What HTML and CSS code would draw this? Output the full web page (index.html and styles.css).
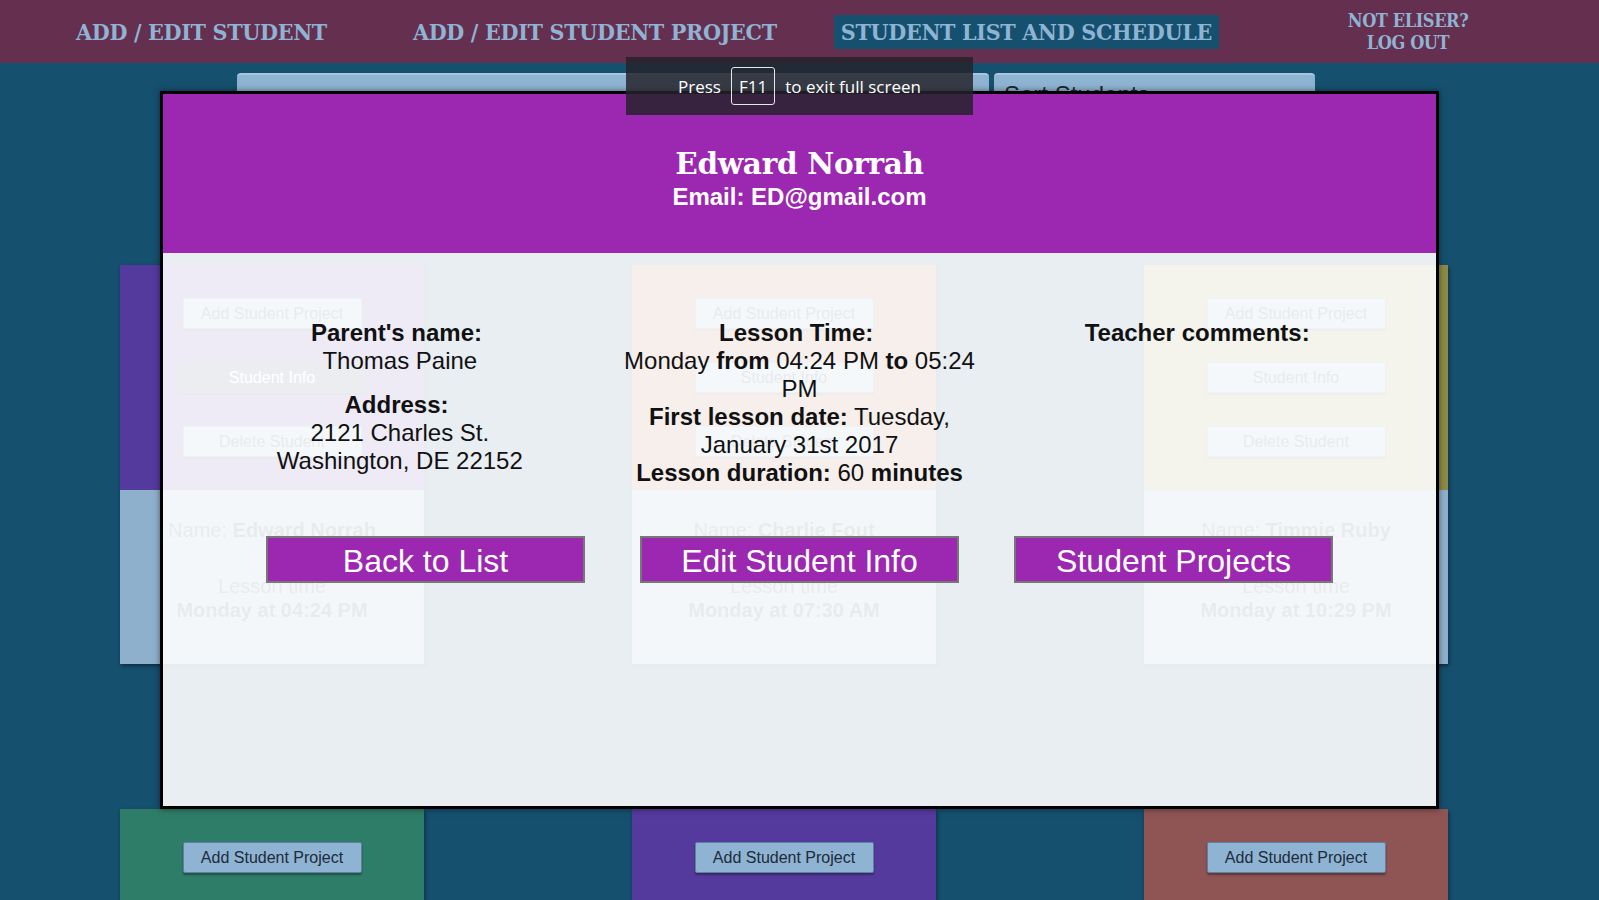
FILE: index.html
```html
<!DOCTYPE html>
<html lang="en">
<head>
<meta charset="utf-8">
<title>Student List and Schedule</title>
<link rel="stylesheet" href="styles.css">
</head>
<body>
<nav class="topnav">
  <a class="nav-link nav-student">ADD / EDIT STUDENT</a>
  <a class="nav-link nav-project">ADD / EDIT STUDENT PROJECT</a>
  <a class="nav-link nav-active">STUDENT LIST AND SCHEDULE</a>
  <div class="nav-user"><span>NOT ELISER?</span><span>LOG OUT</span></div>
</nav>

<main class="page">
  <div class="controls">
    <div class="search"></div>
    <div class="sort">Sort Students</div>
  </div>

  <div class="grid">
    <div class="card">
      <div class="card-top c-purple">
        <button class="card-btn">Add Student Project</button>
        <button class="card-btn card-btn-active">Student Info</button>
        <button class="card-btn card-btn-last">Delete Student</button>
      </div>
      <div class="card-bottom">
        <p class="card-name">Name: <b>Edward Norrah</b></p>
        <p class="card-lt">Lesson time</p>
        <p class="card-when"><b>Monday at 04:24 PM</b></p>
      </div>
    </div>
    <div class="card">
      <div class="card-top c-orange">
        <button class="card-btn">Add Student Project</button>
        <button class="card-btn">Student Info</button>
        <button class="card-btn card-btn-last">Delete Student</button>
      </div>
      <div class="card-bottom">
        <p class="card-name">Name: <b>Charlie Fout</b></p>
        <p class="card-lt">Lesson time</p>
        <p class="card-when"><b>Monday at 07:30 AM</b></p>
      </div>
    </div>
    <div class="card">
      <div class="card-top c-olive">
        <button class="card-btn">Add Student Project</button>
        <button class="card-btn">Student Info</button>
        <button class="card-btn card-btn-last">Delete Student</button>
      </div>
      <div class="card-bottom">
        <p class="card-name">Name: <b>Timmie Ruby</b></p>
        <p class="card-lt">Lesson time</p>
        <p class="card-when"><b>Monday at 10:29 PM</b></p>
      </div>
    </div>
    <div class="card">
      <div class="card-top c-green">
        <button class="card-btn">Add Student Project</button>
        <button class="card-btn">Student Info</button>
        <button class="card-btn card-btn-last">Delete Student</button>
      </div>
    </div>
    <div class="card">
      <div class="card-top c-purple">
        <button class="card-btn">Add Student Project</button>
        <button class="card-btn">Student Info</button>
        <button class="card-btn card-btn-last">Delete Student</button>
      </div>
    </div>
    <div class="card">
      <div class="card-top c-red">
        <button class="card-btn">Add Student Project</button>
        <button class="card-btn">Student Info</button>
        <button class="card-btn card-btn-last">Delete Student</button>
      </div>
    </div>
  </div>
</main>

<div class="modal">
  <header class="modal-header">
    <div class="modal-name">Edward Norrah</div>
    <div class="modal-email">Email: ED@gmail.com</div>
  </header>
  <div class="modal-info">
    <div class="info-col info-col-left">
      <div class="info-block"><b>Parent's name:&nbsp;</b><br>Thomas Paine</div>
      <div class="info-block info-gap"><b>Address:&nbsp;</b><br>2121 Charles St.<br>Washington, DE 22152</div>
    </div>
    <div class="info-col">
      <div class="info-block"><b>Lesson Time:&nbsp;</b><br>Monday <b>from</b> 04:24 PM <b>to</b> 05:24 PM<br><b>First lesson date:</b> Tuesday, January 31st 2017<br><b>Lesson duration:</b> 60 <b>minutes</b></div>
    </div>
    <div class="info-col">
      <div class="info-block"><b>Teacher comments:</b></div>
    </div>
  </div>
  <div class="modal-actions">
    <button class="modal-btn">Back to List</button>
    <button class="modal-btn">Edit Student Info</button>
    <button class="modal-btn">Student Projects</button>
  </div>
</div>

<div class="fs-toast"><span>Press</span><span class="key">F11</span><span>to exit full screen</span></div>
</body>
</html>
```

FILE: styles.css
```css
html, body {
  margin: 0;
  padding: 0;
}
body {
  width: 1599px;
  height: 900px;
  overflow: hidden;
  position: relative;
  background: #15506f;
  font-family: "Liberation Sans", Arial, sans-serif;
}

/* ---------- top navigation ---------- */
.topnav {
  height: 63px;
  background: #652f4f;
  display: flex;
  align-items: center;
  padding: 0 111px 0 76px;
  box-sizing: border-box;
  font-family: "DejaVu Serif", serif;
  font-stretch: condensed;
  font-weight: bold;
  color: #8fb4d3;
}
.nav-link {
  font-size: 23px;
  letter-spacing: -0.3px;
  white-space: nowrap;
}
.nav-student { margin-right: 86px; }
.nav-project { margin-right: 57px; }
.nav-active {
  background: #16506f;
  padding: 3px 7px 4px;
}
.nav-user {
  display: flex;
  flex-direction: column;
  align-items: center;
  width: 160px;
  margin-left: auto;
  font-size: 18px;
  line-height: 22px;
  letter-spacing: -0.4px;
}

/* ---------- controls ---------- */
.controls {
  display: flex;
  gap: 5px;
  padding-left: 237px;
  margin-top: 10px;
}
.search {
  width: 752px;
  height: 40px;
  background: #8fb3d2;
  border-radius: 4px;
  border-top: 2px solid #a9c6df;
  box-sizing: border-box;
}
.sort {
  width: 321px;
  height: 40px;
  background: #8fb3d2;
  border-radius: 4px;
  border-top: 2px solid #a9c6df;
  box-sizing: border-box;
  padding-left: 10px;
  font-size: 24px;
  line-height: 40px;
  color: #1b2633;
}

/* ---------- card grid ---------- */
.grid {
  display: grid;
  grid-template-columns: repeat(3, 304px);
  column-gap: 208px;
  row-gap: 145px;
  padding-left: 120px;
  margin-top: 152px;
}
.card {
  box-shadow: 1px 2px 4px rgba(0, 0, 0, 0.45);
}
.card-top {
  height: 225px;
  display: flex;
  flex-direction: column;
  align-items: center;
  padding-top: 33px;
  box-sizing: border-box;
}
.c-purple { background: #553a9e; }
.c-orange { background: #a35c3c; }
.c-olive { background: #8d8a45; }
.c-green { background: #2e7d68; }
.c-red { background: #8f5454; }

.card-btn {
  width: 179px;
  height: 31px;
  background: #8fb3d2;
  color: #1c2b3a;
  font-family: "Liberation Sans", Arial, sans-serif;
  font-size: 16px;
  border: 1px solid #5f7fa3;
  border-radius: 2px;
  box-shadow: 0 2px 2px rgba(0, 0, 0, 0.35);
  padding: 0;
  margin-bottom: 33px;
}
.card-btn-active {
  width: 190px;
  background: #3a4872;
  color: #ffffff;
  border-color: #3a4872;
}
.card-btn-last { margin-bottom: 0; }

.card-bottom {
  height: 174px;
  background: #8fb0cc;
  text-align: center;
  color: #18324a;
  font-size: 20px;
  line-height: 24px;
  padding-top: 28px;
  box-sizing: border-box;
}
.card-bottom p { margin: 0; }
.card-lt { margin-top: 32px !important; }

/* ---------- modal ---------- */
.modal {
  position: absolute;
  left: 160px;
  top: 91px;
  width: 1279px;
  height: 718px;
  box-sizing: border-box;
  border: 3px solid #000;
  background: rgba(255, 255, 255, 0.9);
  box-shadow: 0 0 6px rgba(0, 0, 0, 0.5);
}
.modal-header {
  height: 159px;
  background: #9c27b0;
  color: #fff;
  text-align: center;
  padding-top: 51px;
  box-sizing: border-box;
}
.modal-name {
  font-family: "DejaVu Serif", serif;
  font-weight: bold;
  font-size: 29.5px;
  line-height: 38px;
  letter-spacing: -0.3px;
}
.modal-email {
  font-size: 24px;
  font-weight: bold;
  line-height: 28px;
}
.modal-info {
  display: flex;
  padding: 66px 40px 0;
  font-size: 24px;
  line-height: 28px;
  color: #111;
}
.info-col {
  flex: 1;
  padding: 0 10px;
  text-align: center;
}
.info-col-left {
  padding: 0 12px 0 8px;
}
.info-gap { margin-top: 16px; }

.modal-actions {
  display: flex;
  justify-content: center;
  gap: 55px;
  margin-top: 49px;
}
.modal-btn {
  width: 319px;
  height: 47px;
  background: #9c27b0;
  border: 2px solid #777;
  color: #fff;
  font-family: "Liberation Sans", Arial, sans-serif;
  font-size: 32px;
  padding: 3px 0 0;
}

/* ---------- fullscreen toast ---------- */
.fs-toast {
  position: absolute;
  left: 626px;
  top: 57px;
  width: 347px;
  height: 58px;
  background: rgba(36, 34, 42, 0.84);
  color: #fff;
  font-family: "Open Sans", sans-serif;
  font-size: 17px;
  display: flex;
  align-items: center;
  justify-content: center;
  gap: 10px;
}
.key {
  border: 1px solid #e6e6e6;
  border-radius: 3px;
  height: 38px;
  line-height: 38px;
  padding: 0 7px;
  box-sizing: border-box;
}
```
